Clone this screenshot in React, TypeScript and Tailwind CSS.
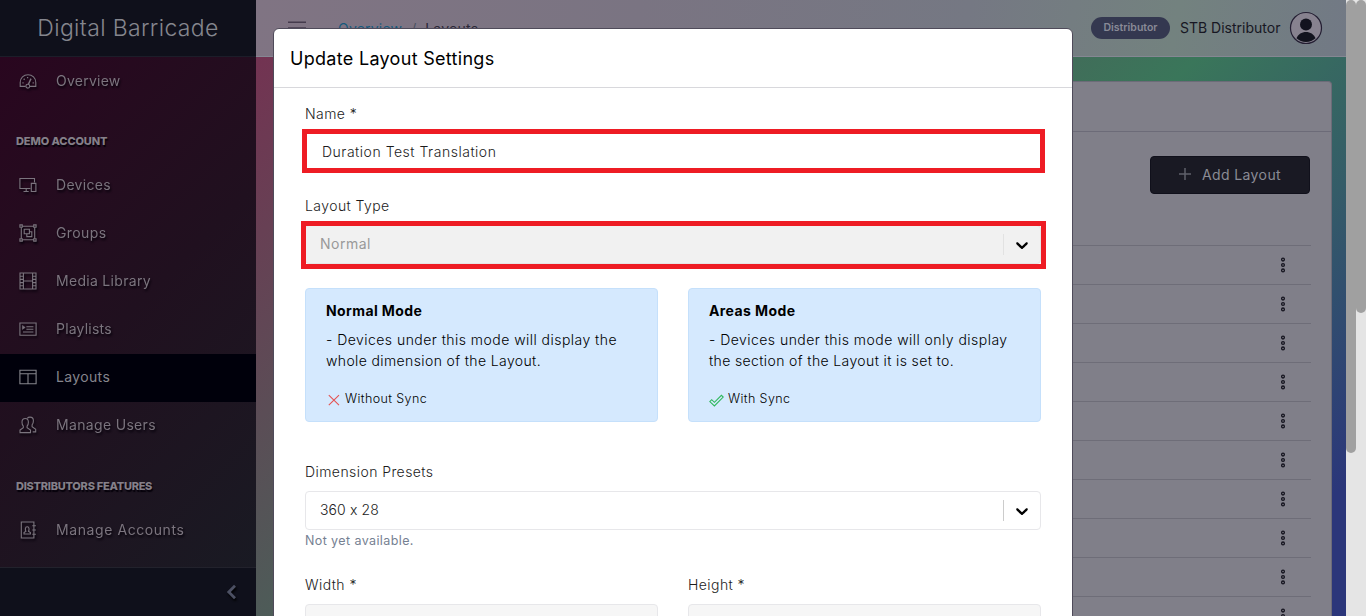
import type { ReactNode } from "react";

function Icon({ children, className = "" }: { children: ReactNode; className?: string }) {
  return (
    <svg
      viewBox="0 0 18 18"
      className={`h-[18px] w-[18px] shrink-0 ${className}`}
      fill="none"
      stroke="currentColor"
      strokeWidth="1.1"
    >
      {children}
    </svg>
  );
}

const icons: Record<string, ReactNode> = {
  speed: (
    <>
      <path d="M6.6 14.400H1.200V10.500a7.800 7.800 0 0 1 15.600 0v3.900H11" />
      <circle cx="8.800" cy="14.200" r="1.900" />
      <path d="M9.400 12.300 12 6.600" strokeWidth="1.400" />
      <path d="M3.400 10.800h1.200M4.700 6.800l.9.900M8.600 5v1.200M13.600 10.800h1.200" strokeWidth="1.300" />
    </>
  ),
  devices: (
    <>
      <path d="M11.500 12.500H.9V2.500h14.600v3.900M4.500 15.500h5.200M7.200 12.500v3" />
      <path d="M12.300 7.400h4.600v8.100h-4.600z" />
    </>
  ),
  groups: (
    <>
      <path d="M2.300 2.300h13.400v13.400H2.300z" />
      <path d="M5.200 5.200h5.200v4.600H5.200zM7.800 9.800v2.800h5V7.800h-2.400" />
      <path
        d="M.9.900h2.400v2.400H.9zM14.700.9h2.400v2.400h-2.400zM.9 14.700h2.400v2.400H.9zM14.700 14.700h2.400v2.400h-2.400z"
        fill="#21101f"
      />
    </>
  ),
  film: (
    <>
      <path d="M1 1h16v16H1zM4.400 1v16M13.600 1v16M4.400 9h9.200" />
      <path d="M1 4.200h3.400M1 7.400h3.400M1 10.600h3.400M1 13.800h3.400M13.600 4.200H17M13.600 7.400H17M13.600 10.600H17M13.600 13.800H17" />
    </>
  ),
  list: (
    <>
      <path d="M.9 3h16.200v12.200H.9z" />
      <path d="M7.400 6.700h7M7.400 9.300h7M4 12h10.400" />
      <path d="M3.400 5.400v4l2.800-2z" fill="currentColor" strokeWidth=".5" />
    </>
  ),
  layout: <path d="M.9 2.200h16.200v13.600H.9zM.9 5.800h16.200M9 5.800v10" />,
  users: (
    <>
      <path d="M1 16.600v-2.600l3.300-2.200V10.200C3.400 9.200 3 7.600 3 6.200 3 3.700 4.200 2.500 6.200 2.500S9.400 3.700 9.400 6.200c0 1.400-.4 3-1.300 4v1.600l3.400 2.200v2.600z" />
      <path d="M8.300 2.300C8.900 1.500 9.900 1.100 11 1.100c2.100 0 3.400 1.300 3.400 3.600 0 1.500-.4 3.200-1.300 4.200v1.900l3.600 2.400v2.700h-3" />
    </>
  ),
  contact: (
    <>
      <path d="M2.300 1h12.600v16H2.300z" />
      <path d="M13.300 4.800h3.600M13.300 9h3.600M13.300 13.200h3.600" />
      <path d="M5 13v-1.500l1.900-1.200c-.8-1.400-1-4.600 1.300-4.600s2.100 3.200 1.300 4.600l1.900 1.200V13z" />
    </>
  ),
};

function NavItem({ icon, label, active, tracking }: { icon: string; label: string; active?: boolean; tracking: string }) {
  return (
    <a
      className={`flex h-12 shrink-0 items-center gap-[19px] pb-[2px] pl-[19px] text-[14px] ${
        active ? "bg-[#00000b] text-[#85858d]" : "text-[#7b747e] [filter:drop-shadow(1px_2px_1px_#05000a)]"
      }`}
    >
      <Icon>{icons[icon]}</Icon>
      <span className={`pb-[2px] whitespace-nowrap ${tracking}`}>{label}</span>
    </a>
  );
}

function NavTitle({ children, tracking }: { children: string; tracking: string }) {
  return (
    <div
      className={`flex shrink-0 items-center pl-4 text-[11px] font-extrabold text-[#858089] [text-shadow:1px_2px_1px_#05000a] ${tracking}`}
    >
      {children}
    </div>
  );
}

function Sidebar() {
  return (
    <aside className="flex h-full w-64 shrink-0 flex-col">
      <div className="flex h-[57px] shrink-0 items-center justify-center border-b border-[#1c1d29] bg-[#0f101b] text-[23px] font-light text-[#85868e]">
        <span className="tracking-[0.35px] whitespace-nowrap">Digital Barricade</span>
      </div>
      <nav className="flex min-h-0 flex-1 flex-col bg-linear-135 from-[#29061f] via-[#20101f] to-[#191a23] pt-px">
        <NavItem icon="speed" label="Overview" tracking="tracking-[0.25px]" />
        <div className="flex h-[56px] shrink-0 pt-[15px]">
          <NavTitle tracking="tracking-[-0.1px]">DEMO ACCOUNT</NavTitle>
        </div>
        <NavItem icon="devices" label="Devices" tracking="tracking-[0.3px]" />
        <NavItem icon="groups" label="Groups" tracking="tracking-[0.4px]" />
        <NavItem icon="film" label="Media Library" tracking="tracking-[0.3px]" />
        <NavItem icon="list" label="Playlists" tracking="tracking-[0.2px]" />
        <NavItem icon="layout" label="Layouts" active tracking="tracking-[0.35px]" />
        <NavItem icon="users" label="Manage Users" tracking="tracking-[0.33px]" />
        <div className="flex h-[57px] shrink-0 pt-[16px]">
          <NavTitle tracking="tracking-[-0.25px]">DISTRIBUTORS FEATURES</NavTitle>
        </div>
        <NavItem icon="contact" label="Manage Accounts" tracking="tracking-[0.58px]" />
      </nav>
      <div className="flex h-[49px] shrink-0 items-center justify-end border-t border-[#22222c] bg-[#0f101b] pr-[19px]">
        <svg
          viewBox="0 0 11 16"
          className="h-4 w-[11px] text-[#4c5063] [filter:drop-shadow(1px_2px_1px_#000)]"
          fill="none"
          stroke="currentColor"
          strokeWidth="2.800"
        >
          <path d="M9 1.800 2.800 8 9 14.200" />
        </svg>
      </div>
    </aside>
  );
}

function Header() {
  return (
    <header className="flex h-[57px] shrink-0 items-center border-b border-[#858793] bg-[linear-gradient(100deg,#807483_0%,#7a7482_35%,#757883_65%,#73827f_84%,#727985_100%)] pr-[23px] pl-8">
      <svg viewBox="0 0 18 16" className="h-4 w-[18px] text-[#453b4d]" fill="none" stroke="currentColor" strokeWidth="1.500">
        <path d="M0 2.200h18M0 8h18M0 14h18" />
      </svg>
      <div className="ml-[32px] flex text-[14px]">
        <span className="tracking-[0.2px] text-[#16597c]">Overview</span>
        <span className="px-[9px] text-[#4b5160]">/</span>
        <span className="tracking-[0.2px] text-[#2b2837]">Layouts</span>
      </div>
      <div className="ml-auto flex items-center">
        <span className="flex h-[22px] w-[79px] items-center justify-center rounded-full bg-[#343850] text-[10.500px] font-semibold text-[#898a97]">
          Distributor
        </span>
        <span className="ml-[10px] w-[100px] pb-[2px] text-[14px] whitespace-nowrap text-[#171723]">STB Distributor</span>
        <svg viewBox="0 0 34 34" className="ml-[9px] h-[34px] w-[34px]">
          <circle cx="17" cy="17" r="15.500" fill="#87828f" stroke="#241f33" strokeWidth="1.200" />
          <circle cx="17" cy="13.500" r="6" fill="#12131e" />
          <path
            d="M7.500 27.300c1.800-4.200 5.200-6.300 9.500-6.300s7.700 2.100 9.500 6.300c-2.600 2.500-5.800 3.600-9.500 3.600s-6.900-1.100-9.500-3.600z"
            fill="#12131e"
          />
        </svg>
      </div>
    </header>
  );
}

function TableRow() {
  return (
    <div className="flex h-[39px] shrink-0 items-center justify-end border-t border-[#6e6d78] pr-[25px]">
      <svg viewBox="0 0 6 16" className="h-4 w-[6px]" fill="none" stroke="#14141f" strokeWidth="1.300">
        <circle cx="3" cy="2.600" r="1.400" />
        <circle cx="3" cy="8" r="1.400" />
        <circle cx="3" cy="13.400" r="1.400" />
      </svg>
    </div>
  );
}

function LayoutsCard() {
  return (
    <section className="mt-6 mr-[14px] ml-[30px] flex min-h-0 flex-1 flex-col overflow-hidden rounded-t border border-b-0 border-[#6c6b78] bg-[#807f89]">
      <div className="h-[50px] shrink-0 border-b border-[#6c6b78]" />
      <div className="flex flex-col pr-5 pl-5">
        <div className="flex h-[113px] shrink-0 justify-end pt-6 pr-px">
          <button className="flex h-[38px] w-[160px] items-center justify-center rounded border border-[#10101b] bg-[#191923] text-[14px] text-[#8a8b95]">
            <svg viewBox="0 0 12 12" className="mr-[11px] mb-[2px] h-3 w-3" fill="none" stroke="#5f606b" strokeWidth="1.500">
              <path d="M6 0v12M0 6h12" />
            </svg>
            <span className="pb-[2px] tracking-[0.4px] whitespace-nowrap">Add Layout</span>
          </button>
        </div>
        {Array.from({ length: 10 }, (_, i) => (
          <TableRow key={i} />
        ))}
      </div>
    </section>
  );
}

function Chevron() {
  return (
    <svg viewBox="0 0 20 20" className="h-5 w-5" fill="#000">
      <path d="M4.516 7.548c0.436-0.446 1.043-0.481 1.576 0l3.908 3.747 3.908-3.747c0.533-0.481 1.141-0.446 1.574 0 0.436 0.445 0.408 1.197 0 1.615-0.406 0.418-4.695 4.502-4.695 4.502-0.217 0.223-0.502 0.335-0.787 0.335s-0.570-0.112-0.789-0.335c0 0-4.287-4.084-4.695-4.502s-0.436-1.170 0-1.615z" />
    </svg>
  );
}

function Select({ value, disabled }: { value: string; disabled?: boolean }) {
  return (
    <div
      className={`flex h-[39px] items-center rounded border pr-2 pl-[14px] text-[14px] ${
        disabled ? "border-[#e6e6e6] bg-[#f1f1f1] text-[#999]" : "border-[#e7e7ea] bg-white font-light text-[#222]"
      }`}
    >
      <span className={`pb-[2px] ${disabled ? "tracking-[0.5px]" : "tracking-[0.1px]"}`}>{value}</span>
      <span className={`mr-2 ml-auto h-[21px] w-px ${disabled ? "bg-[#e2e2e2]" : "bg-[#ccc]"}`} />
      <Chevron />
    </div>
  );
}

function Label({ children }: { children: string }) {
  return (
    <label className="flex h-[21px] items-center pb-[2px] text-[14px] font-light tracking-[0.43px] text-[#1c1c1c]">
      {children}
    </label>
  );
}

type ModeCardProps = {
  title: string;
  lines: [string, string];
  icon: ReactNode;
  note: string;
};

function ModeCard({ title, lines, icon, note }: ModeCardProps) {
  return (
    <div className="flex h-[134px] flex-1 flex-col rounded border border-[#c5e0fb] bg-[#d5e9fe] pl-5 text-[14px] text-black">
      <div className="mt-[11px] flex h-[21px] items-center font-bold tracking-[0.4px]">{title}</div>
      <div className="mt-[8px] leading-[21px] font-light whitespace-nowrap">
        <span className="tracking-[0.46px]">{lines[0]}</span>
        <br />
        <span className="tracking-[0.38px]">{lines[1]}</span>
      </div>
      <div className="mt-[18px] flex h-5 items-center text-[12.500px] font-light">
        {icon}
        <span className="ml-1 tracking-[0.4px]">{note}</span>
      </div>
    </div>
  );
}

function Modal() {
  return (
    <div className="absolute top-[28px] left-[273px] flex h-[640px] w-[800px] flex-col rounded-md border border-[#4f4b5a] bg-white">
      <div className="flex h-[59px] shrink-0 items-center border-b border-[#d8d8dc] pl-4 text-[18px] tracking-[0.3px] text-black">
        Update Layout Settings
      </div>
      <div className="flex flex-col pr-[31px] pl-[31px]">
        <div className="mt-[16px]">
          <Label>Name *</Label>
        </div>
        <div className="relative mt-[7px] flex h-[38px] items-center pl-[17px] text-[14px] font-light tracking-[0.52px] text-[#1c1c1c]">
          Duration Test Translation
          <span className="absolute -top-[3px] -right-[4px] -bottom-[3px] -left-[3px] border-[5px] border-[#ee1c24]" />
        </div>
        <div className="mt-[26px]">
          <Label>Layout Type</Label>
        </div>
        <div className="relative mt-[8px]">
          <Select value="Normal" disabled />
          <span className="absolute -top-[4px] -right-[5px] -bottom-[5px] -left-[4px] border-[5px] border-[#ee1c24]" />
        </div>
        <div className="mt-[24px] flex gap-[30px]">
          <ModeCard
            title="Normal Mode"
            lines={["- Devices under this mode will display the", "whole dimension of the Layout."]}
            note="Without Sync"
            icon={
              <svg viewBox="0 0 15 15" className="h-[15px] w-[15px]" fill="none" stroke="#e55353" strokeWidth="1.100">
                <path d="m2.800 3.200 10.200 10M13 3.200 2.800 13.200" />
              </svg>
            }
          />
          <ModeCard
            title="Areas Mode"
            lines={["- Devices under this mode will only display", "the section of the Layout it is set to."]}
            note="With Sync"
            icon={
              <svg viewBox="0 0 15 15" className="h-[15px] w-[15px]" fill="none" stroke="#2eb85c" strokeWidth="1.100">
                <path d="M.8 9.600 2.700 7.700 5.400 10.300l7-7 1.800 1.800-8.800 8.800z" />
              </svg>
            }
          />
        </div>
        <div className="mt-[40px]">
          <Label>Dimension Presets</Label>
        </div>
        <div className="mt-[8px]">
          <Select value="360 x 28" />
        </div>
        <div className="mt-[2px] flex h-[18px] items-center text-[12.500px] tracking-[0.4px] text-[#768192]">
          Not yet available.
        </div>
        <div className="mt-[25px] flex gap-[30px]">
          {["Width *", "Height *"].map((label) => (
            <div key={label} className="flex-1">
              <Label>{label}</Label>
              <div className="mt-[8px] h-[38px] rounded border border-[#e7e7ea] bg-[#f6f6f6]" />
            </div>
          ))}
        </div>
      </div>
    </div>
  );
}

function ScrollBars() {
  return (
    <div className="flex w-5 shrink-0 bg-[#e5e5e5]">
      <div className="h-[453px] w-[10px] rounded-full bg-[#a0a0a0]" />
      <div className="h-[313px] w-[10px] rounded-full bg-[#a0a0a0]" />
    </div>
  );
}

export default function App() {
  return (
    <div className="relative flex h-[616px] w-[1366px] overflow-hidden bg-[linear-gradient(135deg,#733352_220px,#4f5a58_608px,#3a765a_887px,#345c68_1080px,#2b367a_1294px)] font-[Inter,sans-serif] [font-feature-settings:'calt'_0]">
      <Sidebar />
      <main className="flex min-w-0 flex-1 flex-col">
        <Header />
        <LayoutsCard />
      </main>
      <ScrollBars />
      <Modal />
    </div>
  );
}
